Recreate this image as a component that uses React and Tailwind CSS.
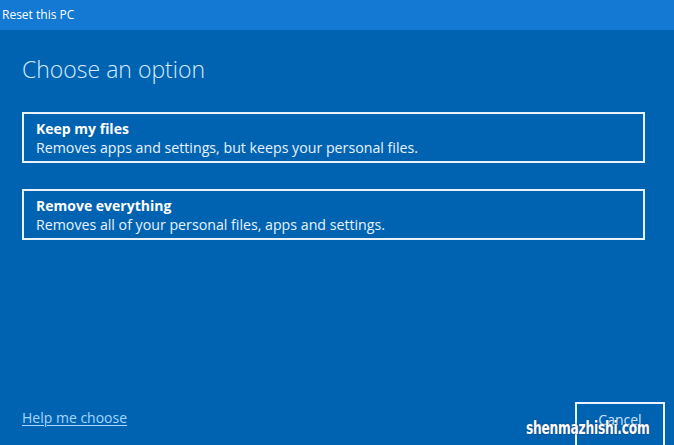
import React from 'react'

const options = [
  { title: 'Keep my files', desc: 'Removes apps and settings, but keeps your personal files.' },
  { title: 'Remove everything', desc: 'Removes all of your personal files, apps and settings.' },
]

export default function App() {
  return (
    <div
      className="relative w-[674px] h-[445px] overflow-hidden bg-[#0063b1] flex flex-col"
      style={{ fontFamily: '"Open Sans", "Noto Sans", sans-serif' }}
    >
      {/* Title bar */}
      <div className="h-[30px] bg-[#1479d2] flex items-center pl-[2px] text-[12px] text-white">
        Reset this PC
      </div>

      <div className="flex-1 flex flex-col px-[22px]">
        <h1 className="mt-[24px] text-[23px] leading-[31px] font-light text-[#d4ebff]">Choose an option</h1>

        <div className="mt-[27px] flex flex-col gap-[26px] pr-[7px]">
          {options.map(o => (
            <div key={o.title} className="border-2 border-[#e6f3ff] h-[51px] px-[12px] pt-[5px] text-white">
              <div className="text-[14px] leading-[19px] font-bold">{o.title}</div>
              <div className="text-[14.2px] leading-[19px] text-[#e8f3ff]">{o.desc}</div>
            </div>
          ))}
        </div>

        <div className="mt-auto flex items-end justify-between">
          <a className="mb-[17px] text-[14px] text-[#a6d6ff] underline underline-offset-2">Help me choose</a>
          <button className="mr-[-13px] w-[90px] h-[43px] border-2 border-[#e6f3ff] border-b-0 text-[14px] text-[#cfe6fb] pb-[10px]">
            Cancel
          </button>
        </div>
      </div>

      {/* watermark */}
      <div
        className="absolute left-[526px] top-[418px] text-[17px] leading-[20px] font-bold text-white tracking-[-0.3px] origin-left scale-x-[0.8]"
        style={{ fontFamily: '"DejaVu Sans Condensed", "DejaVu Sans", sans-serif', textShadow: '0 0 2px #1b3a66' }}
      >
        shenmazhishi.com
      </div>
    </div>
  )
}
